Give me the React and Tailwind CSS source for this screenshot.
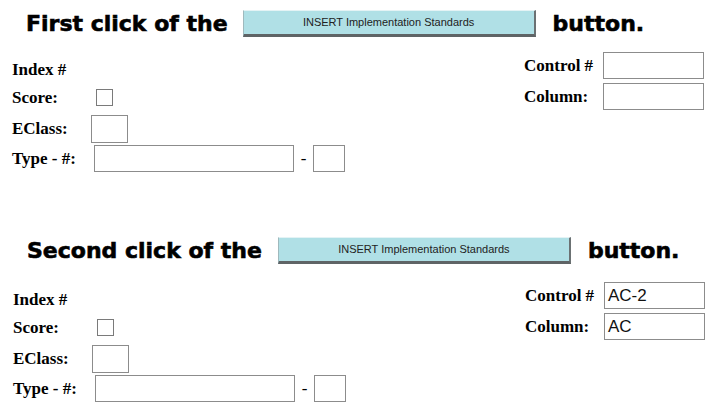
import React from "react";

const serif = { fontFamily: '"Liberation Serif", "Times New Roman", serif' };
const heavy = { fontFamily: '"DejaVu Sans", sans-serif', WebkitTextStroke: "0.6px #000" };

function Header({ lead, headGap }) {
  return (
    <div className="flex items-center h-[27px]">
      <span className="font-bold text-[22px] leading-none text-black whitespace-nowrap" style={heavy}>
        {lead}
      </span>
      <div
        className={`${headGap} w-[293px] h-[27px] flex items-center justify-center bg-[#b0e0e6] border-t border-l border-t-[#e4f3f5] border-l-[#9fb9bd] border-b-[3px] border-r-[2px] border-b-[#5f6466] border-r-[#6b7173] text-[11px] text-[#222] whitespace-nowrap`}
        style={{ fontFamily: '"Liberation Sans", Arial, sans-serif' }}
      >
        INSERT Implementation Standards
      </div>
      <span className="ml-[17px] font-bold text-[22px] leading-none text-black whitespace-nowrap" style={heavy}>
        button.
      </span>
    </div>
  );
}

function Box({ className, value }) {
  return (
    <div
      className={`border border-[#8c8c8c] bg-white flex items-center pl-[3px] text-[17px] font-normal text-[#111] ${className}`}
      style={{ fontFamily: '"Liberation Sans", Arial, sans-serif' }}
    >
      {value}
    </div>
  );
}

function Section({ lead, headGap, headMl, control, column, bodyMt, shift }) {
  return (
    <div>
      <div className={headMl}>
        <Header lead={lead} headGap={headGap} />
      </div>
      <div className={`flex ${bodyMt} ${shift}`}>
        <div className="flex flex-col w-[512px] text-[17px] font-bold text-black" style={serif}>
          <div className="h-[24px] flex items-center mt-[6px]">Index #</div>
          <div className="h-[31px] flex items-center">
            <span className="w-[84px]">Score:</span>
            <div className="w-[17px] h-[17px] border border-[#7a7a7a] bg-white" />
          </div>
          <div className="h-[31px] flex items-center">
            <span className="w-[79px]">EClass:</span>
            <Box className="w-[37px] h-[28px]" />
          </div>
          <div className="h-[29px] flex items-center">
            <span className="w-[82px]">Type - #:</span>
            <Box className="w-[200px] h-[27px]" />
            <span className="w-[19px] text-center font-normal">-</span>
            <Box className="w-[32px] h-[27px]" />
          </div>
        </div>
        <div className="flex flex-col gap-[4px] text-[17px] font-bold text-black" style={serif}>
          <div className="flex items-center h-[27px]">
            <span className="w-[79px] whitespace-nowrap">Control #</span>
            <Box className="w-[101px] h-[27px]" value={control} />
          </div>
          <div className="flex items-center h-[27px]">
            <span className="w-[79px]">Column:</span>
            <Box className="w-[101px] h-[27px]" value={column} />
          </div>
        </div>
      </div>
    </div>
  );
}

export default function App() {
  return (
    <div className="w-[720px] h-[418px] bg-white overflow-hidden pt-[10px]">
      <Section
        lead="First click of the"
        headGap="ml-[15px]"
        headMl="ml-[26px]"
        control=""
        column=""
        bodyMt="mt-[15px]"
        shift="ml-[12px]"
      />
      <div className="h-[64px]" />
      <Section
        lead="Second click of the"
        headGap="ml-[16px]"
        headMl="ml-[27px]"
        control="AC-2"
        column="AC"
        bodyMt="mt-[18px]"
        shift="ml-[13px]"
      />
    </div>
  );
}
